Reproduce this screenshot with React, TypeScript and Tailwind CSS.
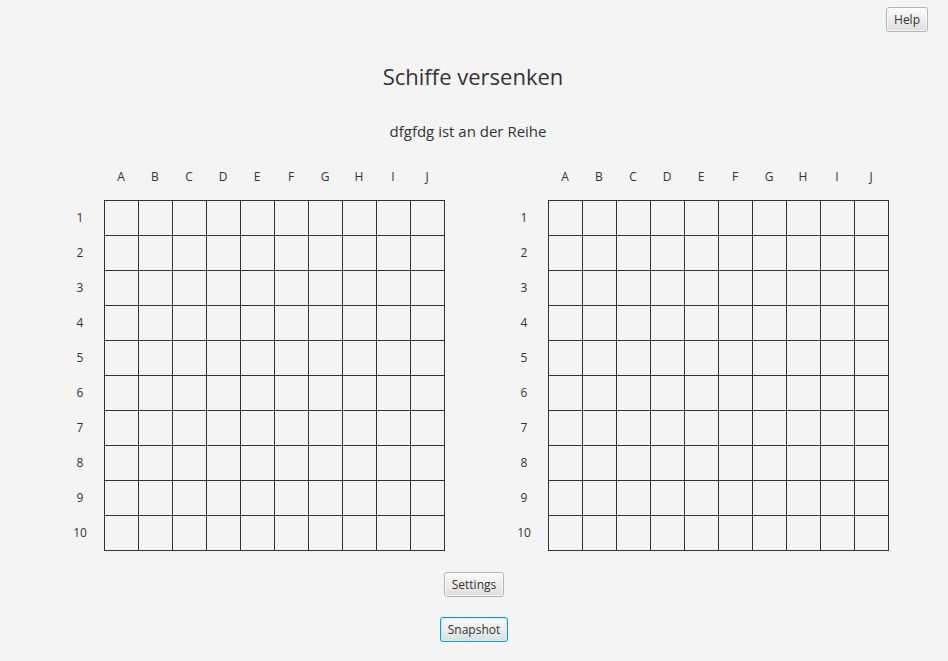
import React from 'react';

const COLS = ['A', 'B', 'C', 'D', 'E', 'F', 'G', 'H', 'I', 'J'];
const ROWS = [1, 2, 3, 4, 5, 6, 7, 8, 9, 10];

const FxButton: React.FC<{ label: string; focused?: boolean }> = ({ label, focused }) => (
  <button
    className={
      'h-[25px] px-[7px] rounded-[3px] text-[12px] leading-none text-[#333] bg-gradient-to-b from-[#fbfbfb] to-[#dedede] ' +
      (focused
        ? 'border border-[#039ed3] shadow-[inset_0_0_0_1px_#d6eef7]'
        : 'border border-[#b5b5b5] shadow-[inset_0_0_0_1px_#ffffffaa]')
    }
  >
    {label}
  </button>
);

const Board: React.FC = () => (
  <div className="flex flex-col">
    <div className="flex h-[24px] mb-[11px]">
      <div className="w-[36px]" />
      {COLS.map((c) => (
        <div key={c} className="w-[34px] text-center text-[12px] leading-[24px] text-[#333]">
          {c}
        </div>
      ))}
    </div>
    <div className="flex">
      <div className="flex flex-col w-[24px] mr-[12px]">
        {ROWS.map((r) => (
          <div key={r} className="h-[35px] flex items-center justify-center text-[12px] text-[#333]">
            {r}
          </div>
        ))}
      </div>
      <div className="grid grid-cols-[repeat(10,34px)] grid-rows-[repeat(10,35px)] border-l border-t border-[#333]">
        {Array.from({ length: 100 }).map((_, i) => (
          <div key={i} className="border-r border-b border-[#333]" />
        ))}
      </div>
    </div>
  </div>
);

const App: React.FC = () => {
  return (
    <div className="w-full h-[661px] bg-[#f4f4f4] flex flex-col font-['Open_Sans',sans-serif] overflow-hidden">
      <div className="flex justify-end pt-[7px] pr-[20px]">
        <FxButton label="Help" />
      </div>
      <h1 className="mt-[29px] pr-[2px] text-center text-[22px] leading-[30px] text-[#333]">Schiffe versenken</h1>
      <p className="mt-[30px] pr-[12px] text-center text-[15px] leading-[20px] text-[#333]">dfgfdg ist an der Reihe</p>
      <div className="mt-[24px] flex pl-[68px] gap-[67px]">
        <Board />
        <Board />
      </div>
      <div className="mt-[21px] flex justify-center">
        <FxButton label="Settings" />
      </div>
      <div className="mt-[20px] flex justify-center">
        <FxButton label="Snapshot" focused />
      </div>
    </div>
  );
};

export default App;
